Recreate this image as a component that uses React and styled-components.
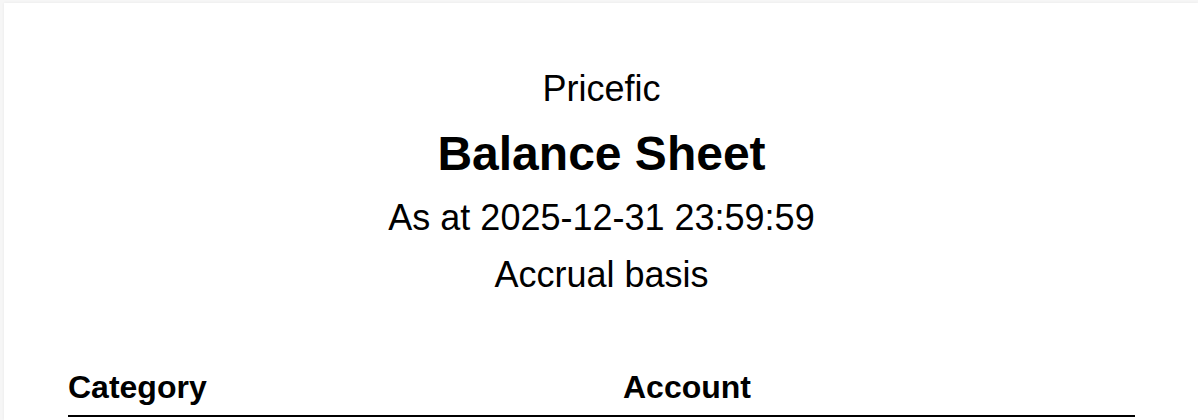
import React from "react";
import styled, { createGlobalStyle } from "styled-components";

const GlobalStyle = createGlobalStyle`
  html, body {
    margin: 0;
    padding: 0;
    background: #f6f6f6;
    font-family: "Liberation Sans", Arial, sans-serif;
    color: #000;
    overflow: hidden;
  }
`;

const Sheet = styled.div`
  margin: 3px 0 0 4px;
  min-height: 417px;
  padding: 68px 63px 0 64px;
  background: #fff;
  box-shadow: 0 0 3px rgba(0, 0, 0, 0.06);
  box-sizing: border-box;
`;

const Header = styled.header`
  display: flex;
  flex-direction: column;
  align-items: center;
  text-align: center;
`;

const Line = styled.div`
  font-size: ${(p) => p.size || 36}px;
  font-weight: ${(p) => (p.bold ? 700 : 400)};
  line-height: 1;
  margin-top: ${(p) => p.gap || 0}px;
`;

const HeadRow = styled.div`
  display: grid;
  grid-template-columns: 555px 1fr;
  margin-top: 78px;
  padding-bottom: 12px;
  border-bottom: 2px solid #000;
`;

const HeadCell = styled.div`
  font-size: 32px;
  font-weight: 700;
  line-height: 1;
  text-align: left;
`;

export default function App() {
  return (
    <>
      <GlobalStyle />
      <Sheet>
        <Header>
          <Line>Pricefic</Line>
          <Line size={48} bold gap={23}>
            Balance Sheet
          </Line>
          <Line gap={22}>As at 2025-12-31 23:59:59</Line>
          <Line gap={21}>Accrual basis</Line>
        </Header>
        <HeadRow>
          <HeadCell>Category</HeadCell>
          <HeadCell>Account</HeadCell>
        </HeadRow>
      </Sheet>
    </>
  );
}
